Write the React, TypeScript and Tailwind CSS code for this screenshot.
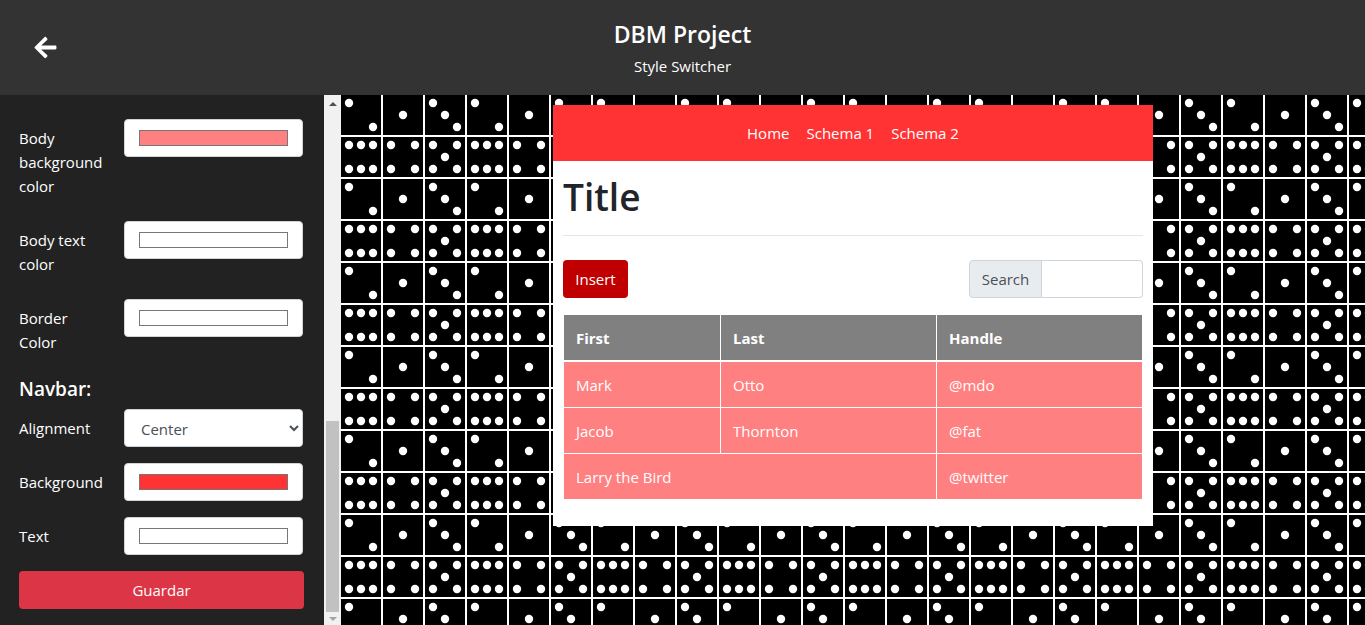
import React from "react";
import { FaArrowLeft } from "react-icons/fa";

const font = "font-['Open_Sans','Noto_Sans',sans-serif]";

const pips: Record<string, [number, number][]> = {
  two: [[8, 8], [32, 32]],
  one: [[20, 20]],
  three: [[8, 8], [20, 20], [32, 32]],
  six: [[8, 8], [20, 8], [32, 8], [8, 32], [20, 32], [32, 32]],
  four: [[8, 8], [32, 8], [8, 32], [32, 32]],
  five: [[8, 8], [32, 8], [20, 20], [8, 32], [32, 32]],
};

const tiles: [string, number, number][] = [
  ["two", 0, 0],
  ["one", 42, 0],
  ["three", 84, 0],
  ["six", 0, 42],
  ["four", 42, 42],
  ["five", 84, 42],
];

const DominoBackground = () => (
  <svg className="absolute inset-0 w-full h-full">
    <defs>
      <pattern id="dominoes" width="126" height="84" patternUnits="userSpaceOnUse">
        <rect width="126" height="84" fill="#fff" />
        {tiles.map(([name, x, y]) => (
          <g key={name} transform={`translate(${x} ${y})`}>
            <rect width="40" height="40" fill="#000" />
            {pips[name].map(([cx, cy]) => (
              <circle key={`${cx}-${cy}`} cx={cx} cy={cy} r="4.2" fill="#fff" />
            ))}
          </g>
        ))}
      </pattern>
    </defs>
    <rect width="100%" height="100%" fill="url(#dominoes)" />
  </svg>
);

const ColorRow = ({ label, value }: { label: string; value: string }) => (
  <div className="flex items-start mb-4">
    <label className="w-[105px] shrink-0 py-[7px] pr-5 leading-6">{label}</label>
    <input
      type="color"
      defaultValue={value}
      className="w-[179px] h-[38px] px-3 py-1.5 bg-white border border-[#ced4da] rounded"
    />
  </div>
);

const Scrollbar = () => (
  <div className="w-[17px] shrink-0 bg-[#f1f1f1] flex flex-col items-center">
    <div className="h-[17px] shrink-0 flex items-center justify-center">
      <div className="w-0 h-0 border-x-4 border-x-transparent border-b-4 border-b-[#505050]" />
    </div>
    <div className="mt-[309px] w-[13px] h-[191px] bg-[#c1c1c1]" />
    <div className="h-[13px] shrink-0 flex items-center justify-center">
      <div className="w-0 h-0 border-x-4 border-x-transparent border-t-4 border-t-[#a3a3a3]" />
    </div>
  </div>
);

const Sidebar = () => (
  <aside className="w-[341px] shrink-0 flex bg-[#222222] text-white">
    <div className="w-[324px] pt-6 pl-[19px]">
      <ColorRow label="Body background color" value="#ff8080" />
      <ColorRow label="Body text color" value="#ffffff" />
      <ColorRow label="Border Color" value="#ffffff" />
      <h5 className="text-[19px] font-semibold leading-6 mb-2">Navbar:</h5>
      <div className="flex items-start mb-4">
        <label className="w-[105px] shrink-0 py-[7px] leading-6">Alignment</label>
        <select className="w-[179px] h-[38px] px-3 pt-0.5 bg-white border border-[#ced4da] rounded text-[#495057]">
          <option>Center</option>
        </select>
      </div>
      <ColorRow label="Background" value="#ff3333" />
      <ColorRow label="Text" value="#ffffff" />
      <button className="w-[285px] h-[38px] bg-[#dc3545] rounded text-white">Guardar</button>
    </div>
    <Scrollbar />
  </aside>
);

const Card = () => (
  <div className="relative w-[600px] h-[421px] mt-2.5 ml-[212px] bg-white text-[#212529]">
    <nav className="h-14 bg-[#ff3333] flex items-center justify-center gap-[17px] text-white">
      <a>Home</a>
      <a>Schema 1</a>
      <a>Schema 2</a>
    </nav>
    <div className="px-2.5">
      <h1 className="text-[37px] leading-[48px] font-semibold mt-3 mb-[14px]">Title</h1>
      <hr className="border-[#e5e5e5]" />
      <div className="flex justify-between mt-6 mb-4">
        <button className="h-[38px] w-[65px] bg-[#c00000] text-white rounded">Insert</button>
        <div className="flex h-[38px]">
          <span className="w-[73px] flex items-center justify-center bg-[#e9ecef] border border-[#ced4da] rounded-l text-[#495057]">
            Search
          </span>
          <input className="w-[101px] border border-l-0 border-[#ced4da] rounded-r" />
        </div>
      </div>
      <table className="w-[580px] border-collapse table-fixed text-white">
        <thead>
          <tr className="bg-[#808080] h-[46px] text-left">
            <th className="w-[157px] px-3 pt-px border border-white border-b-2">First</th>
            <th className="w-[216px] px-3 pt-px border border-white border-b-2">Last</th>
            <th className="px-3 pt-px border border-white border-b-2">Handle</th>
          </tr>
        </thead>
        <tbody className="bg-[#ff8080]">
          <tr className="h-[47px]">
            <td className="px-3 pt-px border border-white">Mark</td>
            <td className="px-3 pt-px border border-white">Otto</td>
            <td className="px-3 pt-px border border-white">@mdo</td>
          </tr>
          <tr className="h-[46px]">
            <td className="px-3 border border-white">Jacob</td>
            <td className="px-3 border border-white">Thornton</td>
            <td className="px-3 border border-white">@fat</td>
          </tr>
          <tr className="h-[46px]">
            <td colSpan={2} className="px-3 border border-white">Larry the Bird</td>
            <td className="px-3 border border-white">@twitter</td>
          </tr>
        </tbody>
      </table>
    </div>
  </div>
);

export default function App() {
  return (
    <div className={`w-[1365px] h-[625px] overflow-hidden flex flex-col text-[15px] leading-6 ${font}`}>
      <header className="h-[95px] shrink-0 bg-[#333333] text-white flex flex-col items-center relative">
        <FaArrowLeft className="absolute left-[33px] top-[35px] text-[25px]" />
        <h1 className="text-[23px] font-semibold leading-7 mt-5">DBM Project</h1>
        <p className="mt-1.5 leading-6">Style Switcher</p>
      </header>
      <div className="flex flex-1 min-h-0">
        <Sidebar />
        <main className="relative flex-1 overflow-hidden">
          <DominoBackground />
          <Card />
        </main>
      </div>
    </div>
  );
}
